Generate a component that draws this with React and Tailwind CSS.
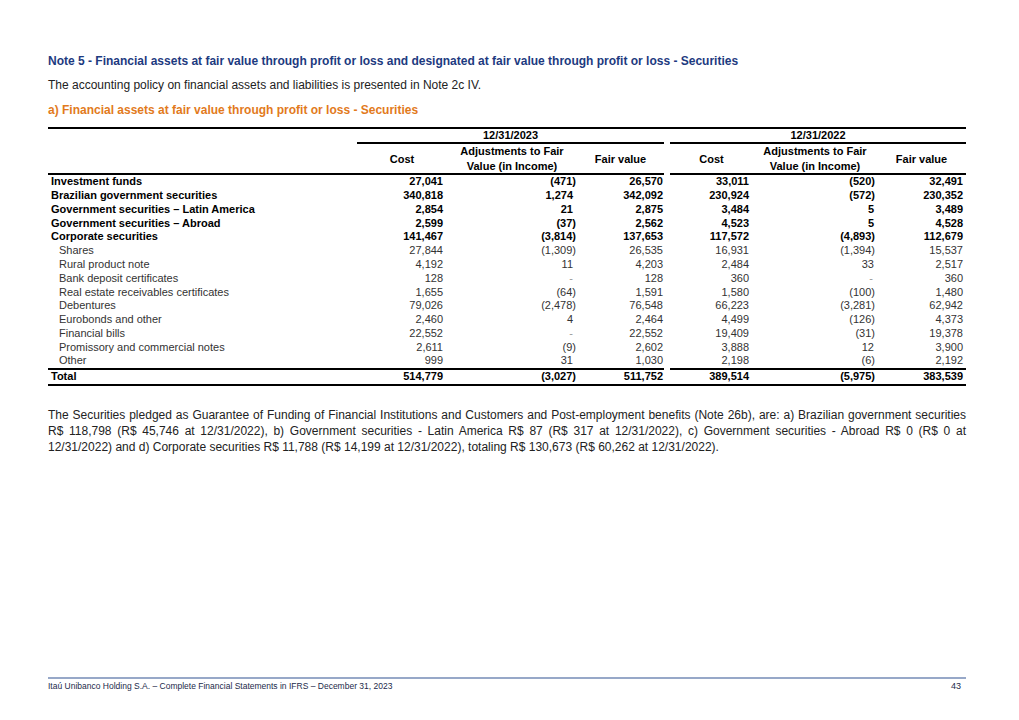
import React from "react";

const rows = [
  { l: "Investment funds", b: true, v: ["27,041", "(471)", "26,570", "33,011", "(520)", "32,491"] },
  { l: "Brazilian government securities", b: true, v: ["340,818", "1,274", "342,092", "230,924", "(572)", "230,352"] },
  { l: "Government securities – Latin America", b: true, v: ["2,854", "21", "2,875", "3,484", "5", "3,489"] },
  { l: "Government securities – Abroad", b: true, v: ["2,599", "(37)", "2,562", "4,523", "5", "4,528"] },
  { l: "Corporate securities", b: true, v: ["141,467", "(3,814)", "137,653", "117,572", "(4,893)", "112,679"] },
  { l: "Shares", v: ["27,844", "(1,309)", "26,535", "16,931", "(1,394)", "15,537"] },
  { l: "Rural product note", v: ["4,192", "11", "4,203", "2,484", "33", "2,517"] },
  { l: "Bank deposit certificates", v: ["128", "-", "128", "360", "-", "360"] },
  { l: "Real estate receivables certificates", v: ["1,655", "(64)", "1,591", "1,580", "(100)", "1,480"] },
  { l: "Debentures", v: ["79,026", "(2,478)", "76,548", "66,223", "(3,281)", "62,942"] },
  { l: "Eurobonds and other", v: ["2,460", "4", "2,464", "4,499", "(126)", "4,373"] },
  { l: "Financial bills", v: ["22,552", "-", "22,552", "19,409", "(31)", "19,378"] },
  { l: "Promissory and commercial notes", v: ["2,611", "(9)", "2,602", "3,888", "12", "3,900"] },
  { l: "Other", v: ["999", "31", "1,030", "2,198", "(6)", "2,192"] },
];

const total = ["514,779", "(3,027)", "511,752", "389,514", "(5,975)", "383,539"];

const GRID = "grid grid-cols-[309px_90px_130px_87px_6px_83px_124px_89px]";

function NumCells({ v }) {
  const cls = (i, val) => {
    const paren = val.endsWith(")");
    const dash = val === "-";
    const pads = [
      "pr-[4px]",
      paren ? "pr-[1px]" : "pr-[4px]",
      "pr-[1px]",
      "pr-[4px]",
      paren ? "pr-[2px]" : dash ? "pr-[4px]" : "pr-[3px]",
      "pr-[3px]",
    ];
    return `text-right ${pads[i]} ${dash ? "text-[#9a9a9a]" : ""}`;
  };
  return (
    <>
      <div className={cls(0, v[0])}>{v[0]}</div>
      <div className={cls(1, v[1])}>{v[1]}</div>
      <div className={cls(2, v[2])}>{v[2]}</div>
      <div />
      <div className={cls(3, v[3])}>{v[3]}</div>
      <div className={cls(4, v[4])}>{v[4]}</div>
      <div className={cls(5, v[5])}>{v[5]}</div>
    </>
  );
}

export default function App() {
  return (
    <div
      className="min-h-[720px] w-[1019px] bg-white flex flex-col px-[48px] pt-[53px] pb-[29px] text-black"
      style={{ fontFamily: '"Liberation Sans", Arial, sans-serif' }}
    >
      <div className="text-[12px] leading-[16px] font-bold text-[#1d3a80]">
        Note 5 - Financial assets at fair value through profit or loss and designated at fair value through profit or loss - Securities
      </div>
      <div className="mt-[8px] text-[12px] leading-[16px] text-[#222]">
        The accounting policy on financial assets and liabilities is presented in Note 2c IV.
      </div>
      <div className="mt-[9px] text-[12px] leading-[16px] font-bold text-[#e27a1c]">
        a) Financial assets at fair value through profit or loss - Securities
      </div>

      {/* Table */}
      <div className="mt-[9px] w-[918px] text-[11px]">
        <div className="border-t-2 border-black" />
        {/* Year row */}
        <div className={`${GRID} font-bold leading-[12px]`}>
          <div />
          <div className="col-span-3 text-center border-b-2 border-black pb-[1px]">12/31/2023</div>
          <div />
          <div className="col-span-3 text-center border-b-2 border-black pb-[1px]">12/31/2022</div>
        </div>
        {/* Header row */}
        <div className={`${GRID} font-bold h-[29px] items-center leading-[15px]`}>
          <div />
          <div className="text-center">Cost</div>
          <div className="text-center">Adjustments to Fair<br />Value (in Income)</div>
          <div className="text-center">Fair value</div>
          <div />
          <div className="text-center">Cost</div>
          <div className="text-center">Adjustments to Fair<br />Value (in Income)</div>
          <div className="text-center">Fair value</div>
        </div>
        <div className="flex h-[2px]">
          <div className="w-[616px] bg-black" />
          <div className="w-[6px]" />
          <div className="w-[296px] bg-black" />
        </div>
        {rows.map((r) => (
          <div key={r.l} className={`${GRID} h-[13.77px] items-center leading-[13px] ${r.b ? "font-bold" : "text-[#333]"}`}>
            <div className={r.b ? "pl-[3px]" : "pl-[11px]"}>{r.l}</div>
            <NumCells v={r.v} />
          </div>
        ))}
        <div className="flex h-[2px]">
          <div className="w-[616px] bg-black" />
          <div className="w-[6px]" />
          <div className="w-[296px] bg-black" />
        </div>
        <div className={`${GRID} h-[14px] items-center font-bold leading-[13px]`}>
          <div className="pl-[3px]">Total</div>
          <NumCells v={total} />
        </div>
        <div className="border-t-2 border-black" />
      </div>

      <p className="mt-[21px] w-[918px] text-[12px] leading-[16px] text-justify text-[#222]">
        The Securities pledged as Guarantee of Funding of Financial Institutions and Customers and Post-employment benefits (Note 26b), are: a) Brazilian government securities R$ 118,798 (R$ 45,746 at 12/31/2022), b) Government securities - Latin America R$ 87 (R$ 317 at 12/31/2022), c) Government securities - Abroad R$ 0 (R$ 0 at 12/31/2022) and d) Corporate securities R$ 11,788 (R$ 14,199 at 12/31/2022), totaling R$ 130,673 (R$ 60,262 at 12/31/2022).
      </p>

      <div className="mt-auto w-[918px]">
        <div className="h-[2px] bg-[#97a8c8]" />
        <div className="flex justify-between items-center mt-[2px] text-[8.5px] leading-[10px] text-[#1c2a4a]">
          <span>Itaú Unibanco Holding S.A. – Complete Financial Statements in IFRS – December 31, 2023</span>
          <span className="text-[9px] pr-[5px]">43</span>
        </div>
      </div>
    </div>
  );
}
